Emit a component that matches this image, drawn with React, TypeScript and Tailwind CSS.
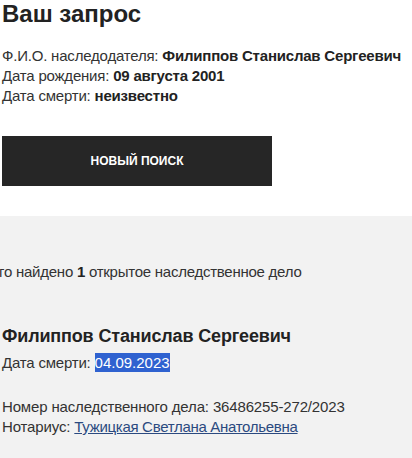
export default function App() {
  return (
    <div
      className="min-h-screen flex flex-col bg-white text-[#333]"
      style={{ fontFamily: '"Liberation Sans", Arial, sans-serif' }}
    >
      <div className="pl-[2px]">
        <h1 className="text-[24px] leading-[28px] font-bold text-[#222]">Ваш запрос</h1>
        <div className="mt-[18px] text-[15px] leading-[20px] tracking-[-0.2px]">
          <div>
            Ф.И.О. наследодателя: <b className="text-[#222]">Филиппов Станислав Сергеевич</b>
          </div>
          <div>
            Дата рождения: <b className="text-[#222]">09 августа 2001</b>
          </div>
          <div>
            Дата смерти: <b className="text-[#222]">неизвестно</b>
          </div>
        </div>
        <button className="mt-[30px] w-[270px] h-[50px] bg-[#262626] text-white text-[12px] font-bold uppercase flex items-center justify-center">
          Новый поиск
        </button>
      </div>
      <div className="mt-[30px] flex-1 bg-[#f2f2f2] pt-[46px] pl-[2px] overflow-hidden">
        <div className="text-[15px] leading-[20px] tracking-[-0.25px] ml-[-28px] whitespace-nowrap">
          Всего найдено <b className="text-[#222]">1</b> открытое наследственное дело
        </div>
        <div className="mt-[42px] text-[18px] leading-[24px] tracking-[-0.15px] font-bold text-[#222]">
          Филиппов Станислав Сергеевич
        </div>
        <div className="mt-[5px] text-[15px] leading-[20px] tracking-[-0.2px]">
          Дата смерти: <span className="bg-[#2f62d0] text-white py-[1px] tracking-normal">04.09.2023</span>
        </div>
        <div className="mt-[24px] text-[15px] leading-[20px] tracking-[-0.15px]">
          <div>Номер наследственного дела: 36486255-272/2023</div>
          <div>
            Нотариус:{" "}
            <a href="#" className="text-[#2b4a80] underline tracking-[-0.3px]">
              Тужицкая Светлана Анатольевна
            </a>
          </div>
        </div>
      </div>
    </div>
  );
}
